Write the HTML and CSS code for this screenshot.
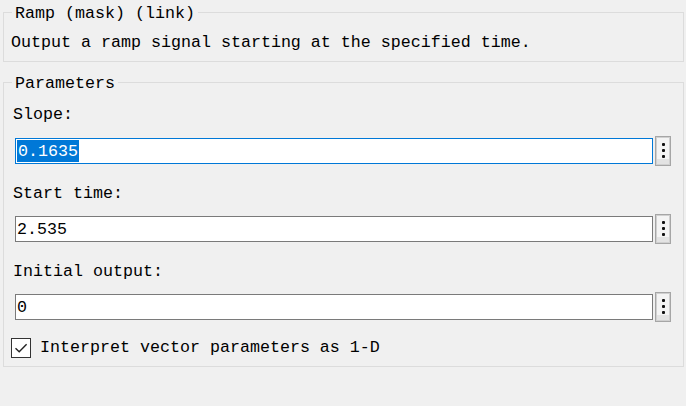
FILE: index.html
```html
<!DOCTYPE html>
<html>
<head>
<meta charset="utf-8">
<link rel="stylesheet" href="styles.css">
</head>
<body>
<div class="page">
  <fieldset class="group group-desc">
    <legend class="legend">Ramp (mask) (link)</legend>
    <div class="desc">Output a ramp signal starting at the specified time.</div>
  </fieldset>
  <fieldset class="group group-params">
    <legend class="legend">Parameters</legend>
    <div class="params">
      <div class="label">Slope:</div>
      <div class="row">
        <div class="field focused"><span class="sel">0.1635</span></div>
        <div class="more"><span class="dot"></span><span class="dot"></span><span class="dot"></span></div>
      </div>
      <div class="label">Start time:</div>
      <div class="row">
        <div class="field">2.535</div>
        <div class="more"><span class="dot"></span><span class="dot"></span><span class="dot"></span></div>
      </div>
      <div class="label">Initial output:</div>
      <div class="row">
        <div class="field">0</div>
        <div class="more"><span class="dot"></span><span class="dot"></span><span class="dot"></span></div>
      </div>
      <div class="check-row">
        <span class="checkbox">
          <svg width="18" height="18" viewBox="0 0 18 18"><path d="M3.5 9.2 L7.2 12.8 L14.6 5.2" fill="none" stroke="#222" stroke-width="1.4"/></svg>
        </span>
        <span class="check-label">Interpret vector parameters as 1-D</span>
      </div>
    </div>
  </fieldset>
</div>
</body>
</html>
```
FILE: styles.css
```css
html, body {
  margin: 0;
  padding: 0;
  background: #f0f0f0;
}
body {
  font-family: "Liberation Mono", "DejaVu Sans Mono", monospace;
  font-size: 16.67px;
  line-height: 20px;
  color: #000;
  width: 686px;
  height: 406px;
  overflow: hidden;
}
.page {
  padding: 2px 2px 0 3px;
}
.group {
  margin: 0;
  border: 1px solid #dcdcdc;
  min-width: 0;
}
.group-desc {
  padding: 10px 7px 9px 7px;
}
.group-params {
  margin-top: 10px;
  padding: 11px 12px 8px 7px;
}
.legend {
  margin-left: 1px;
  padding: 0 3px;
  line-height: 24px;
  height: 20px;
}
.desc {
  white-space: nowrap;
  height: 20px;
  line-height: 22px;
}
.params {
  display: flex;
  flex-direction: column;
}
.label {
  padding-left: 2px;
  margin-bottom: 13px;
  white-space: nowrap;
  height: 20px;
  line-height: 24px;
}
.label ~ .label {
  margin-bottom: 12px;
}
.row {
  display: flex;
  align-items: center;
  gap: 2px;
  margin-left: 4px;
  margin-bottom: 16px;
}
.row:last-of-type {
  margin-bottom: 15px;
}
.field {
  flex: 1;
  height: 26px;
  box-sizing: border-box;
  border: 1px solid #7a7a7a;
  background: #fff;
  padding: 1px 1px;
  line-height: 23px;
  white-space: nowrap;
}
.field.focused {
  border-color: #0078d7;
}
.sel {
  display: inline-block;
  background: #0078d7;
  color: #fff;
  padding: 0 1px 0 1px;
  height: 22px;
  line-height: 23px;
  vertical-align: top;
}
.more {
  width: 16px;
  height: 30px;
  box-sizing: border-box;
  border: 1px solid #a6a6a6;
  box-shadow: inset 0 0 0 1px #d0d0d0;
  background: linear-gradient(#f4f4f4 0, #f4f4f4 80%, #e3e3e3 80%, #e3e3e3 100%);
  display: flex;
  flex-direction: column;
  align-items: center;
  padding-top: 6px;
  gap: 3px;
}
.dot {
  width: 3px;
  height: 3px;
  border-radius: 1px;
  background: #111;
}
.check-row {
  display: flex;
  align-items: center;
  gap: 9px;
  margin-left: 0;
}
.checkbox {
  width: 20px;
  height: 20px;
  box-sizing: border-box;
  border: 1px solid #333;
  background: #fff;
  display: flex;
  align-items: center;
  justify-content: center;
}
.checkbox svg {
  display: block;
}
.check-label {
  white-space: nowrap;
}
```
